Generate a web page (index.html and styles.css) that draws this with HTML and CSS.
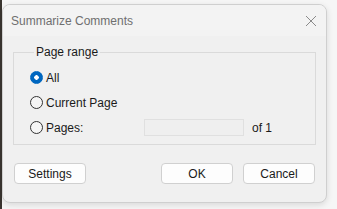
FILE: index.html
```html
<!DOCTYPE html>
<html lang="en">
<head>
    <meta charset="UTF-8">
    <title>Summarize Comments</title>
    <link rel="stylesheet" href="styles.css">
</head>
<body>
    <div class="desktop">
        <div class="window">
            <!-- Title bar -->
            <div class="titlebar">
                <span class="title">Summarize Comments</span>
                <svg class="close" width="12" height="12" viewBox="0 0 12 12">
                    <path d="M1 1 L11 11 M11 1 L1 11" stroke="#8a8a8a" stroke-width="1" fill="none"/>
                </svg>
            </div>

            <div class="content">
                <fieldset class="group">
                    <legend>Page range</legend>
                    <label class="radio-row">
                        <span class="radio checked"></span>All
                    </label>
                    <label class="radio-row">
                        <span class="radio"></span>Current Page
                    </label>
                    <div class="radio-row pages-row">
                        <label class="radio-label"><span class="radio"></span>Pages:</label>
                        <span class="page-input"></span>
                        <span class="of">of 1</span>
                    </div>
                </fieldset>

                <div class="buttons">
                    <button class="btn">Settings</button>
                    <div class="right-buttons">
                        <button class="btn">OK</button>
                        <button class="btn">Cancel</button>
                    </div>
                </div>
            </div>
        </div>
    </div>
</body>
</html>
```

FILE: styles.css
```css
body {
    margin: 0;
    padding: 0;
    background-color: #ebebeb;
    font-family: "Liberation Sans", Arial, sans-serif;
    font-size: 12px;
    color: #1a1a1a;
}

.desktop {
    width: 337px;
    height: 209px;
    padding: 4px 0 0 2px;
    box-sizing: border-box;
    background: linear-gradient(to right, #3a3530 0, #3a3530 2px, #f6f6f6 2px);
}

.window {
    width: 325px;
    height: 199px;
    background-color: #f0f0f0;
    border: 1px solid #cfcfcf;
    border-radius: 8px;
    box-sizing: border-box;
    overflow: hidden;
    box-shadow: 0 2px 6px rgba(0, 0, 0, 0.12);
}

.titlebar {
    height: 31px;
    background-color: #f3f3f3;
    display: flex;
    align-items: center;
    justify-content: space-between;
    padding: 0 9px 0 8px;
}

.title {
    color: #6f6f6f;
    font-size: 12px;
}

.content {
    padding: 9px 10px 0 10px;
}

.group {
    margin: 0;
    border: 1px solid #dadada;
    padding: 6px 0 6px 16px;
    height: 100px;
    box-sizing: border-box;
}

.group legend {
    padding: 0 2px;
    margin-left: 4px;
    font-size: 12px;
}

.radio-row {
    display: flex;
    align-items: center;
    height: 25px;
}

.radio-label {
    display: flex;
    align-items: center;
    width: 114px;
}

.radio {
    width: 11px;
    height: 11px;
    border: 1px solid #333;
    border-radius: 50%;
    margin-right: 3px;
    box-sizing: content-box;
    background: #f5f5f5;
}

.radio.checked {
    border-color: #0067c0;
    background: radial-gradient(circle, #fff 0, #fff 2px, #0067c0 2.5px);
}

.page-input {
    width: 98px;
    height: 15px;
    border: 1px solid #e0e0e0;
    background-color: #efefef;
}

.of {
    margin-left: 8px;
}

.buttons {
    display: flex;
    justify-content: space-between;
    margin-top: 18px;
    padding: 0 0 0 1px;
}

.right-buttons {
    display: flex;
    gap: 10px;
    margin-right: 1px;
}

.btn {
    width: 72px;
    height: 21px;
    background-color: #fdfdfd;
    border: 1px solid #d0d0d0;
    border-radius: 4px;
    font-family: inherit;
    font-size: 12px;
    color: #1a1a1a;
    padding: 0;
}
```
